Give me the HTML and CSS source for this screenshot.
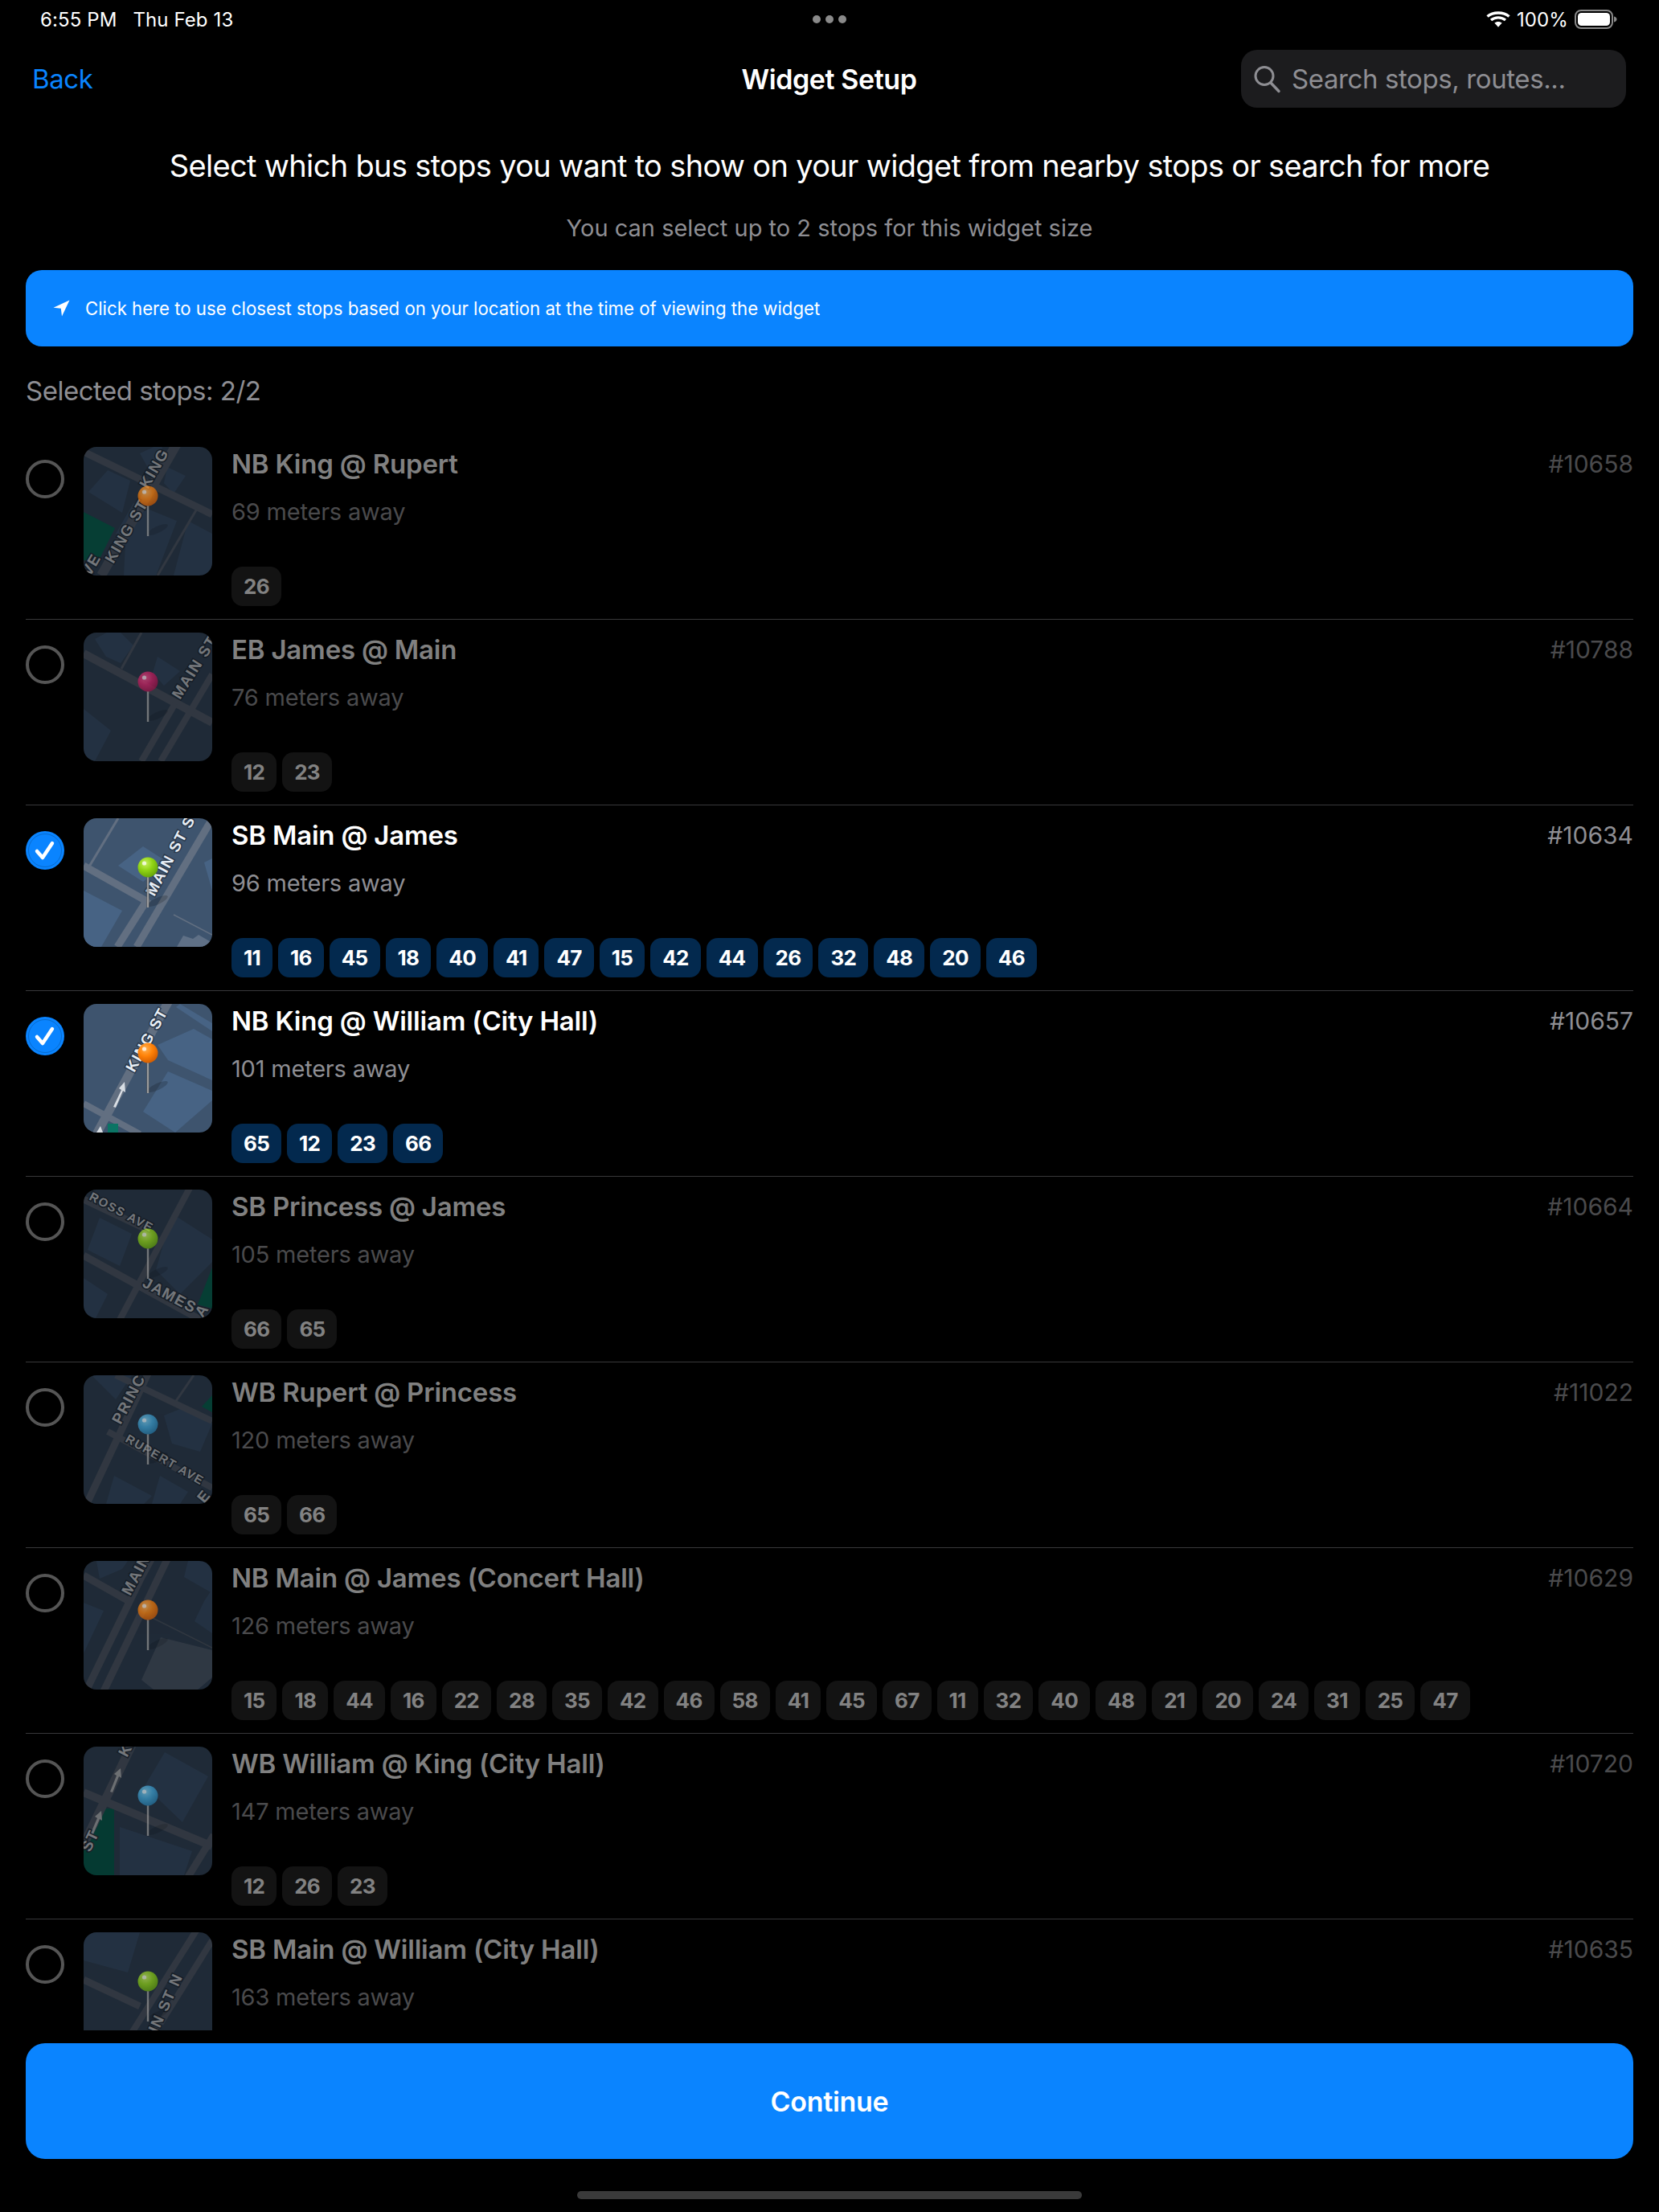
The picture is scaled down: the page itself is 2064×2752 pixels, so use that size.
FILE: index.html
```html
<!DOCTYPE html>
<html lang="en">
<head>
<meta charset="utf-8">
<title>Widget Setup</title>
<link rel="stylesheet" href="styles.css">
</head>
<body>
<svg class="defs" width="0" height="0" aria-hidden="true">
  <defs>
    <radialGradient id="g-orange" cx=".38" cy=".3" r=".8"><stop offset="0" stop-color="#ffb050"/><stop offset=".45" stop-color="#ff8208"/><stop offset="1" stop-color="#c85400"/></radialGradient>
    <radialGradient id="g-magenta" cx=".38" cy=".3" r=".8"><stop offset="0" stop-color="#f0508a"/><stop offset=".45" stop-color="#cc1c62"/><stop offset="1" stop-color="#8a0c3e"/></radialGradient>
    <radialGradient id="g-green" cx=".38" cy=".3" r=".8"><stop offset="0" stop-color="#c8f060"/><stop offset=".45" stop-color="#90d414"/><stop offset="1" stop-color="#5c9a08"/></radialGradient>
    <radialGradient id="g-blue" cx=".38" cy=".3" r=".8"><stop offset="0" stop-color="#80d0f0"/><stop offset=".45" stop-color="#3ea4d6"/><stop offset="1" stop-color="#1f6f9c"/></radialGradient>
    <linearGradient id="g-stick" x1="0" x2="1" y1="0" y2="0"><stop offset="0" stop-color="#555"/><stop offset=".5" stop-color="#bdbdbd"/><stop offset="1" stop-color="#555"/></linearGradient>
    <g id="pin-base">
      <ellipse cx="92" cy="103" rx="14" ry="4" fill="#000" opacity=".18" transform="rotate(-25 92 103)"/>
      <rect x="78.5" y="72" width="3" height="39" fill="url(#g-stick)"/>
    </g>
    <g id="pin-orange"><use href="#pin-base"/><circle cx="80" cy="61" r="12.5" fill="url(#g-orange)"/><circle cx="75.500" cy="56" r="2.600" fill="#fff" opacity=".75"/></g>
    <g id="pin-magenta"><use href="#pin-base"/><circle cx="80" cy="61" r="12.5" fill="url(#g-magenta)"/><circle cx="75.500" cy="56" r="2.600" fill="#fff" opacity=".75"/></g>
    <g id="pin-green"><use href="#pin-base"/><circle cx="80" cy="61" r="12.5" fill="url(#g-green)"/><circle cx="75.500" cy="56" r="2.600" fill="#fff" opacity=".75"/></g>
    <g id="pin-blue"><use href="#pin-base"/><circle cx="80" cy="61" r="12.5" fill="url(#g-blue)"/><circle cx="75.500" cy="56" r="2.600" fill="#fff" opacity=".75"/></g>
  </defs>
</svg>

<main class="screen">
  <header class="status">
    <div class="status-left"><span>6:55 PM</span><span>Thu Feb 13</span></div>
    <div class="dots"><i></i><i></i><i></i></div>
    <div class="status-right">
      <svg class="wifi" width="30" height="20" viewBox="0 0 30 20"><path d="M1.500 6.500C8.500 .5 21.500 .5 28.500 6.500M6 11C11 6.800 19 6.800 24 11" fill="none" stroke="#fff" stroke-width="3.400"/><path d="M10.300 14.600C13 12.400 17 12.400 19.700 14.600L15 19.800Z" fill="#fff"/></svg>
      <span>100%</span>
      <svg class="battery" width="53" height="24" viewBox="0 0 53 24"><rect x="1" y="1" width="46" height="22" rx="7" fill="none" stroke="#8a8a8a" stroke-width="2"/><rect x="4" y="4" width="40" height="16" rx="4.500" fill="#fff"/><path d="M49 8.500c2.500 .6 3.500 2 3.500 3.500s-1 2.900-3.500 3.500z" fill="#8a8a8a"/></svg>
    </div>
  </header>

  <nav class="nav">
    <a class="back">Back</a>
    <h1 class="nav-title">Widget Setup</h1>
    <div class="search">
      <svg width="36" height="36" viewBox="0 0 36 36"><circle cx="15" cy="14.500" r="11" fill="none" stroke="#8e8e93" stroke-width="3"/><path d="M23 23L33 33.500" stroke="#8e8e93" stroke-width="3.400" stroke-linecap="round"/></svg>
      <span>Search stops, routes...</span>
    </div>
  </nav>

  <p class="lead">Select which bus stops you want to show on your widget from nearby stops or search for more</p>
  <p class="hint">You can select up to 2 stops for this widget size</p>

  <div class="banner">
    <svg width="21" height="21" viewBox="0 0 21 21"><path d="M20.500 .5L.5 9.800l9.300 1 1.200 9.700z" fill="#fff"/></svg>
    <span>Click here to use closest stops based on your location at the time of viewing the widget</span>
  </div>

  <div class="count">Selected stops: 2/2</div>

  <section class="list">

    <article class="row dim">
      <span class="radio"></span>
      <svg class="map" viewBox="0 0 160 160">
        <g class="scene">
          <rect class="land" width="160" height="160"/>
          <path class="block" d="M30 29L58 42 48 82 6 56zM70 8L96 -4 104 20 85 35zM104 25L127 36 112 58 100 45zM62 70L116 92 90 160H50L52 120 40 108zM130 92L160 108V160H112z"/>
          <path class="green" d="M0 81L39 101 19 141H0z"/>
          <path class="road" d="M0 6L160 84" stroke-width="9"/>
          <path class="road" d="M92 160L141 77" stroke-width="3"/>
          <path class="road" d="M22 160L116 -4" stroke-width="12"/>
          <text class="label" transform="translate(37 146) rotate(-60)">KING ST</text>
          <text class="label" transform="translate(80 53) rotate(-60)">KING</text>
          <text class="label" transform="translate(8 162) rotate(-60)">VE</text>
        </g>
        <use class="pin" href="#pin-orange"/>
      </svg>
      <div class="info">
        <div class="head"><h2 class="name">NB King @ Rupert</h2><span class="id">#10658</span></div>
        <div class="dist">69 meters away</div>
        <div class="pills"><b>26</b></div>
      </div>
    </article>

    <article class="row dim">
      <span class="radio"></span>
      <svg class="map" viewBox="0 0 160 160">
        <g class="scene">
          <rect class="land" width="160" height="160"/>
          <path class="block" d="M14 8L40 -6 62 16 46 38 28 30zM92 30L120 48 100 66 86 50zM0 95L34 122 14 160H0z"/>
          <path class="road" d="M0 26L160 112" stroke-width="10"/>
          <path class="road" d="M47 45L72 0" stroke-width="3"/>
          <path class="road" d="M72 160L114 88" stroke-width="8"/>
          <path class="road" d="M96 160L160 52" stroke-width="8"/>
          <text class="label" transform="translate(120 84) rotate(-58)">MAIN ST</text>
        </g>
        <use class="pin" href="#pin-magenta"/>
      </svg>
      <div class="info">
        <div class="head"><h2 class="name">EB James @ Main</h2><span class="id">#10788</span></div>
        <div class="dist">76 meters away</div>
        <div class="pills"><b>12</b><b>23</b></div>
      </div>
    </article>

    <article class="row">
      <span class="radio on"><svg width="48" height="48" viewBox="0 0 48 48"><circle cx="24" cy="24" r="20.500" fill="none" stroke="#0764c0" stroke-width=".8"/><path d="M14 25L21 33 33 15" fill="none" stroke="#fff" stroke-width="4.500" stroke-linecap="round" stroke-linejoin="round"/></svg></span>
      <svg class="map" viewBox="0 0 160 160">
        <g class="scene">
          <rect class="land" width="160" height="160"/>
          <path class="block" d="M43 59L74 35 105 55 74 79zM0 90L48 115 22 160H0zM150 55L160 50V90z"/>
          <path class="road" d="M0 59L80 104" stroke-width="9"/>
          <path class="road" d="M43 0L7 60" stroke-width="3"/>
          <path class="road" d="M42 160L80 100" stroke-width="9"/>
          <path class="road" d="M66 160L158 4" stroke-width="9"/>
          <path class="road" d="M112 120L160 145" stroke-width="1.500"/>
          <path class="bldg" d="M116 160L124 146 136 150 143 145 160 155V160z"/>
          <text class="label" transform="translate(88 98) rotate(-62)">MAIN ST S</text>
        </g>
        <use class="pin" href="#pin-green"/>
      </svg>
      <div class="info">
        <div class="head"><h2 class="name">SB Main @ James</h2><span class="id">#10634</span></div>
        <div class="dist">96 meters away</div>
        <div class="pills"><b>11</b><b>16</b><b>45</b><b>18</b><b>40</b><b>41</b><b>47</b><b>15</b><b>42</b><b>44</b><b>26</b><b>32</b><b>48</b><b>20</b><b>46</b></div>
      </div>
    </article>

    <article class="row">
      <span class="radio on"><svg width="48" height="48" viewBox="0 0 48 48"><circle cx="24" cy="24" r="20.500" fill="none" stroke="#0764c0" stroke-width=".8"/><path d="M14 25L21 33 33 15" fill="none" stroke="#fff" stroke-width="4.500" stroke-linecap="round" stroke-linejoin="round"/></svg></span>
      <svg class="map" viewBox="0 0 160 160">
        <g class="scene">
          <rect class="land" width="160" height="160"/>
          <path class="block" d="M74 134L105 84 160 108V120L114 160zM92 51L137 31 160 44V95L105 70zM120 0L160 24V34L115 4z"/>
          <path class="road" d="M0 124L70 162" stroke-width="8"/>
          <path class="road" d="M16 162L106 -4" stroke-width="11"/>
          <path class="teal" d="M30 149H43V160H30z"/>
          <path class="arrow" d="M37 128L47 107 44 105 51 97 52 110 49 108 40 129z"/>
          <path class="arrow" d="M16 160L21 152 24 160z"/>
          <text class="label" transform="translate(63 86) rotate(-61)">KING ST</text>
        </g>
        <use class="pin" href="#pin-orange"/>
      </svg>
      <div class="info">
        <div class="head"><h2 class="name">NB King @ William (City Hall)</h2><span class="id">#10657</span></div>
        <div class="dist">101 meters away</div>
        <div class="pills"><b>65</b><b>12</b><b>23</b><b>66</b></div>
      </div>
    </article>

    <article class="row dim">
      <span class="radio"></span>
      <svg class="map" viewBox="0 0 160 160">
        <g class="scene">
          <rect class="land" width="160" height="160"/>
          <path class="block" d="M20 35L60 55 45 95 5 75zM110 30L160 62V90L120 130 90 100zM0 110L30 130 15 160H0z"/>
          <path class="green" d="M160 97L142 143 160 148z"/>
          <path class="road" d="M0 12L80 50" stroke-width="9"/>
          <path class="road" d="M45 162L132 -2" stroke-width="8"/>
          <path class="road" d="M0 82L160 170" stroke-width="9"/>
          <text class="label small" transform="translate(6 12) rotate(28)">ROSS AVE</text>
          <text class="label" transform="translate(72 120) rotate(28)">JAMES</text>
          <text class="label" transform="translate(148 160) rotate(-55)">A</text>
        </g>
        <use class="pin" href="#pin-green"/>
      </svg>
      <div class="info">
        <div class="head"><h2 class="name">SB Princess @ James</h2><span class="id">#10664</span></div>
        <div class="dist">105 meters away</div>
        <div class="pills"><b>66</b><b>65</b></div>
      </div>
    </article>

    <article class="row dim">
      <span class="radio"></span>
      <svg class="map" viewBox="0 0 160 160">
        <g class="scene">
          <rect class="land" width="160" height="160"/>
          <path class="block" d="M100 50L125 40 160 60 145 95 110 85zM10 0H60L40 30zM38 125L85 150 75 160H28zM95 125L130 145 120 160H85z"/>
          <path class="green" d="M147 39L160 25V46z"/>
          <path class="road" d="M3 162L80 -2" stroke-width="9"/>
          <path class="road" d="M40 0L160 57" stroke-width="8"/>
          <path class="road" d="M115 32L137 0" stroke-width="3"/>
          <path class="road" d="M30 70L160 140" stroke-width="8"/>
          <text class="label" transform="translate(46 62) rotate(-62)">PRINC</text>
          <text class="label small" transform="translate(51 82) rotate(30)">RUPERT AVE</text>
          <text class="label" transform="translate(150 160) rotate(-50)">E</text>
        </g>
        <use class="pin" href="#pin-blue"/>
      </svg>
      <div class="info">
        <div class="head"><h2 class="name">WB Rupert @ Princess</h2><span class="id">#11022</span></div>
        <div class="dist">120 meters away</div>
        <div class="pills"><b>65</b><b>66</b></div>
      </div>
    </article>

    <article class="row dim">
      <span class="radio"></span>
      <svg class="map" viewBox="0 0 160 160">
        <g class="scene">
          <rect class="land" width="160" height="160"/>
          <path class="block" d="M16 0H55L48 10 20 22zM130 0H160V40L125 20zM0 52L25 62 0 115zM150 50L160 35V90L138 75z"/>
          <path class="road" d="M0 18L60 52" stroke-width="9"/>
          <path class="road" d="M3 162L72 20 84 -2" stroke-width="9"/>
          <path class="road" d="M25 162L104 -2" stroke-width="9"/>
          <path class="road" d="M84 70L160 108" stroke-width="1.500"/>
          <path class="bldg" d="M72 148L96 95 160 111V145L142 160H87z"/>
          <text class="label" transform="translate(58 44) rotate(-62)">MAIN</text>
        </g>
        <use class="pin" href="#pin-orange"/>
      </svg>
      <div class="info">
        <div class="head"><h2 class="name">NB Main @ James (Concert Hall)</h2><span class="id">#10629</span></div>
        <div class="dist">126 meters away</div>
        <div class="pills"><b>15</b><b>18</b><b>44</b><b>16</b><b>22</b><b>28</b><b>35</b><b>42</b><b>46</b><b>58</b><b>41</b><b>45</b><b>67</b><b>11</b><b>32</b><b>40</b><b>48</b><b>21</b><b>20</b><b>24</b><b>31</b><b>25</b><b>47</b></div>
      </div>
    </article>

    <article class="row dim">
      <span class="radio"></span>
      <svg class="map" viewBox="0 0 160 160">
        <g class="scene">
          <rect class="land" width="160" height="160"/>
          <path class="block" d="M76 49L101 7 155 37 123 94z"/>
          <path class="block" d="M45 100L135 130 125 160H45z"/>
          <path class="teal" d="M25 77H38V160H0V125z"/>
          <path class="road" d="M0 57L160 124" stroke-width="10"/>
          <path class="road" d="M130 162L162 110" stroke-width="9"/>
          <path class="road" d="M0 122L60 -2" stroke-width="11"/>
          <path class="arrow" d="M33 56L41 36 38 34 46 27 47 39 44 37 36 57z"/>
          <path class="arrow" d="M8 110L17 89 14 87 22 80 23 92 20 90 11 111z"/>
          <text class="label" transform="translate(54 14) rotate(-62)">K</text>
          <text class="label" transform="translate(8 132) rotate(-65)">ST</text>
        </g>
        <use class="pin" href="#pin-blue"/>
      </svg>
      <div class="info">
        <div class="head"><h2 class="name">WB William @ King (City Hall)</h2><span class="id">#10720</span></div>
        <div class="dist">147 meters away</div>
        <div class="pills"><b>12</b><b>26</b><b>23</b></div>
      </div>
    </article>

    <article class="row dim">
      <span class="radio"></span>
      <svg class="map" viewBox="0 0 160 160">
        <g class="scene">
          <rect class="land" width="160" height="160"/>
          <path class="block" d="M0 0H70L55 50 0 35z"/>
          <path class="road" d="M0 59L70 92" stroke-width="9"/>
          <path class="road" d="M60 125L140 -2" stroke-width="8"/>
          <path class="road" d="M82 135L160 10" stroke-width="8"/>
          <text class="label" transform="translate(92 126) rotate(-66)">IN ST N</text>
        </g>
        <use class="pin" href="#pin-green"/>
      </svg>
      <div class="info">
        <div class="head"><h2 class="name">SB Main @ William (City Hall)</h2><span class="id">#10635</span></div>
        <div class="dist">163 meters away</div>
      </div>
    </article>

  </section>

  <footer class="foot">
    <button class="continue" type="button">Continue</button>
    <div class="home"></div>
  </footer>
</main>
</body>
</html>
```

FILE: styles.css
```css
* { box-sizing: border-box; }
html, body { margin: 0; padding: 0; background: #000; }
body { font-family: Inter, "Liberation Sans", sans-serif; color: #fff; }
.defs { position: absolute; }
.screen { width: 2064px; height: 2752px; display: flex; flex-direction: column; overflow: hidden; background: #000; }

.status { height: 48px; flex: none; display: grid; grid-template-columns: 1fr auto 1fr; align-items: center; padding: 0 50px; font-size: 24px; letter-spacing: .1px; }
.status-left { display: flex; gap: 20px; }
.status-right { display: flex; justify-content: flex-end; align-items: center; gap: 8px; margin-right: 2px; }
.dots { display: flex; gap: 6px; }
.dots i { width: 10px; height: 10px; border-radius: 50%; background: #8a8a8a; }

.nav { height: 72px; margin-top: 14px; flex: none; display: grid; grid-template-columns: 1fr auto 1fr; align-items: center; padding: 0 41px 0 40px; }
.back { font-size: 33px; color: #0a84ff; letter-spacing: -.4px; }
.nav-title { margin: 0; font-size: 34px; font-weight: 600; letter-spacing: -.4px; }
.search { justify-self: end; width: 479px; height: 72px; border-radius: 20px; background: #1c1c1e; display: flex; align-items: center; gap: 13px; padding-left: 14px; color: #8e8e93; font-size: 33px; letter-spacing: -.4px; }

.lead { margin: 48px 0 0; height: 48px; line-height: 48px; text-align: center; font-size: 38px; letter-spacing: -.67px; flex: none; }
.hint { margin: 34px 0 0; height: 40px; line-height: 40px; text-align: center; font-size: 29px; color: #8e8e93; flex: none; }

.banner { margin: 32px 32px 0; height: 95px; flex: none; border-radius: 20px; background: #0a84ff; display: flex; align-items: center; gap: 19px; padding: 0 0 0 34px; font-size: 22.2px; font-weight: 400; }

.count { margin: 33px 32px 0; height: 44px; line-height: 44px; font-size: 33px; color: #8e8e93; flex: none; letter-spacing: -.5px; }

.list { flex: 1; min-height: 0; overflow: hidden; margin: 32px 32px 16px; padding: 0; }
.row { display: flex; align-items: flex-start; padding: 16px 0; border-bottom: 1px solid #38383a; }
.radio { flex: none; width: 48px; height: 48px; margin: 16px 24px 0 0; border-radius: 50%; border: 4px solid #555; }
.radio.on { border: 0; background: #0a84ff; }
.radio svg { display: block; }
.map { flex: none; width: 160px; height: 160px; border-radius: 16px; margin-right: 24px; display: block; }
.land { fill: #3e546e; }
.block { fill: #476384; }
.road { fill: none; stroke: #626f81; }
.green { fill: #0c7c69; }
.teal { fill: #0b7464; }
.bldg { fill: #5f7086; }
.arrow { fill: #d8dde3; }
.label { font-family: "Liberation Sans", sans-serif; font-weight: 700; font-size: 19px; letter-spacing: 1.5px; fill: #e8eef5; stroke: #2b3a4d; stroke-width: 3px; paint-order: stroke; }
.label.small { font-size: 15px; }
.dim .scene { opacity: .5; }
.dim .pin { opacity: .68; }

.info { flex: 1; min-width: 0; min-height: 198px; display: flex; flex-direction: column; }
.head { display: flex; justify-content: space-between; align-items: center; height: 42px; }
.name { margin: 0; font-size: 33px; font-weight: 600; letter-spacing: -.2px; color: #fff; }
.id { font-size: 30px; color: #8e8e93; }
.dist { margin-top: 19px; height: 40px; line-height: 40px; font-size: 29px; color: #8e8e93; letter-spacing: -.2px; }
.pills { margin-top: auto; display: flex; gap: 7px; height: 49px; }
.pills b { height: 49px; line-height: 49px; padding: 0 15px; border-radius: 14px; background: #03294e; color: #fff; font-size: 26px; font-weight: 700; letter-spacing: -.7px; }
.dim .name { color: #808080; }
.dim .id, .dim .dist { color: #4a4a4c; }
.dim .pills b { background: #131313; color: #828282; }

.foot { flex: none; padding: 0 32px 16px; display: flex; flex-direction: column; align-items: center; }
.continue { width: 100%; height: 144px; border: 0; border-radius: 24px; background: #0a84ff; color: #fff; font: 600 34px Inter, "Liberation Sans", sans-serif; letter-spacing: -.3px; }
.home { width: 628px; height: 10px; margin-top: 40px; border-radius: 5px; background: #3a3a3a; }
```
